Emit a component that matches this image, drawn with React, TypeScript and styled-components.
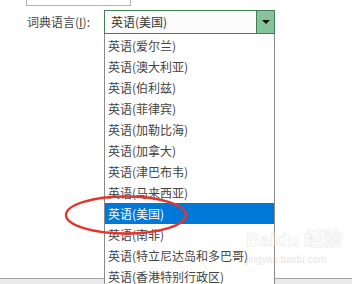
import styled, { createGlobalStyle } from "styled-components";

const GlobalStyle = createGlobalStyle`
  html, body {
    margin: 0;
    padding: 0;
    background: #ffffff;
  }
  body {
    font-family: "Noto Sans CJK SC", "Noto Sans", sans-serif;
  }
`;

const languages = [
  "英语(爱尔兰)",
  "英语(澳大利亚)",
  "英语(伯利兹)",
  "英语(菲律宾)",
  "英语(加勒比海)",
  "英语(加拿大)",
  "英语(津巴布韦)",
  "英语(马来西亚)",
  "英语(美国)",
  "英语(南非)",
  "英语(特立尼达岛和多巴哥)",
  "英语(香港特别行政区)",
];

const selected = "英语(美国)";

const App = () => {
  return (
    <>
      <GlobalStyle />
      <Page>
        <Content>
          <TopBox />
          <FieldRow>
            <Label>
              词典语言(<u>I</u>):
            </Label>
            <ComboWrap>
              <Combo>
                <ComboValue>{selected}</ComboValue>
                <ComboButton>
                  <Arrow />
                </ComboButton>
              </Combo>
              <List>
                {languages.map((lang) => (
                  <Item key={lang} $active={lang === selected}>
                    {lang}
                  </Item>
                ))}
              </List>
            </ComboWrap>
          </FieldRow>
        </Content>
        <Footer />
        <Circle viewBox="0 0 130 44">
          <ellipse
            cx="65"
            cy="22"
            rx="60"
            ry="18.5"
            fill="none"
            stroke="#e3342d"
            strokeWidth="2.4"
          />
        </Circle>
        <Watermark>
          <span>Baidu 经验</span>
          <small>jingyan.baidu.com</small>
        </Watermark>
      </Page>
    </>
  );
};

const Page = styled.div`
  position: relative;
  width: 352px;
  height: 284px;
  overflow: hidden;
  display: flex;
  flex-direction: column;
  background: #ffffff;
`;

const Content = styled.div`
  flex: 1;
  padding-left: 26px;
`;

const TopBox = styled.div`
  width: 103px;
  height: 5px;
  border: 1px solid #b4b4b4;
  border-top: none;
`;

const FieldRow = styled.div`
  display: flex;
  align-items: flex-start;
  margin-top: 4px;
`;

const Label = styled.div`
  width: 77px;
  padding-left: 1px;
  height: 24px;
  line-height: 24px;
  font-size: 12px;
  color: #444444;

  u {
    text-decoration-color: #444444;
    text-underline-offset: 1px;
  }
`;

const ComboWrap = styled.div`
  position: relative;
  width: 171px;
`;

const Combo = styled.div`
  display: flex;
  height: 24px;
  box-sizing: border-box;
  border: 1px solid #3e7f55;
  background: #fcfcfc;
`;

const ComboValue = styled.div`
  flex: 1;
  padding-left: 6px;
  line-height: 22px;
  font-size: 12px;
  color: #333333;
`;

const ComboButton = styled.div`
  width: 17px;
  display: grid;
  place-items: center;
  background: #86c39b;
  border-left: 1px solid #3e7f55;
`;

const Arrow = styled.div`
  width: 0;
  height: 0;
  border-left: 4px solid transparent;
  border-right: 4px solid transparent;
  border-top: 4px solid #111111;
`;

const List = styled.div`
  position: absolute;
  top: 100%;
  left: 0;
  width: 171px;
  box-sizing: border-box;
  border-left: 1px solid #8a8a8a;
  border-right: 1px solid #8a8a8a;
  background: #ffffff;
  display: flex;
  flex-direction: column;
  padding-top: 1px;
  z-index: 2;
`;

const Item = styled.div<{ $active: boolean }>`
  height: 21px;
  line-height: 21px;
  padding-left: 3px;
  font-size: 12px;
  white-space: nowrap;
  overflow: hidden;
  color: ${({ $active }) => ($active ? "#ffffff" : "#444444")};
  background: ${({ $active }) => ($active ? "#0078d7" : "transparent")};
`;

const Footer = styled.div`
  height: 5px;
  border-top: 1px solid #a6a6a6;
  background: #e9e9e9;
`;

const Circle = styled.svg`
  position: absolute;
  left: 61px;
  top: 193px;
  width: 130px;
  height: 44px;
  z-index: 3;
  overflow: visible;
`;

const Watermark = styled.div`
  position: absolute;
  left: 246px;
  top: 229px;
  z-index: 4;
  display: flex;
  flex-direction: column;
  font-family: "Liberation Sans", "Noto Sans CJK SC", sans-serif;
  color: rgba(255, 255, 255, 0.6);
  -webkit-text-stroke: 0.6px rgba(215, 215, 215, 0.6);

  span {
    font-size: 19px;
    font-weight: 700;
    line-height: 22px;
  }

  small {
    font-size: 10px;
    line-height: 12px;
    margin-top: 3px;
    -webkit-text-stroke: 0;
    color: rgba(215, 215, 215, 0.7);
  }
`;

export default App;
